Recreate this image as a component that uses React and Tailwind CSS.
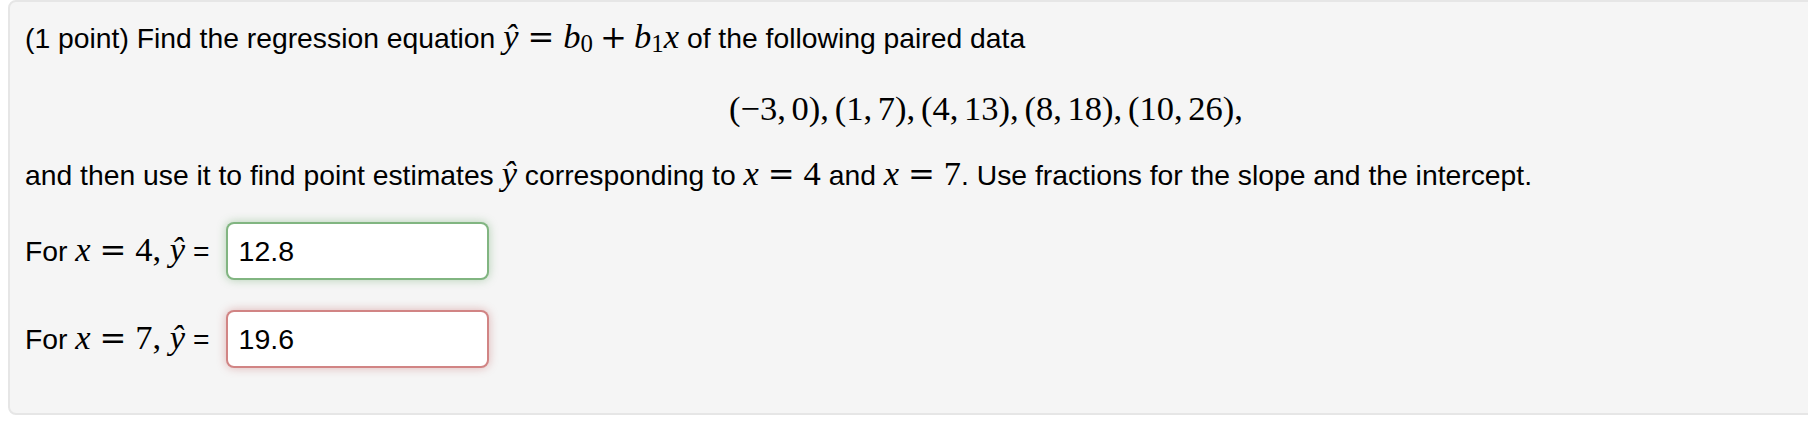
import React from "react";

const serif = "font-['Liberation_Serif',serif]";

function M({ children }) {
  return <span className={`${serif} text-[34.5px] leading-none whitespace-nowrap`}>{children}</span>;
}
function I({ children }) {
  return <span className="italic">{children}</span>;
}
function Rel({ children }) {
  return (
    <span className="mx-[0.278em] font-['DejaVu_Serif',serif] text-[0.93em]">{children}</span>
  );
}
function Bin({ children }) {
  return (
    <span className="mx-[0.222em] font-['DejaVu_Serif',serif] text-[0.93em]">{children}</span>
  );
}
function Sub({ children }) {
  return <span className="text-[0.72em] align-[-0.18em]">{children}</span>;
}
function Th() {
  return <span className="ml-[0.167em]"></span>;
}

function Answer({ label, value, ok }) {
  const cls = ok
    ? "border-[rgba(81,153,81,0.72)] shadow-[0_0_10px_rgba(81,153,81,0.4)]"
    : "border-[rgba(191,84,84,0.72)] shadow-[0_0_10px_rgba(191,84,84,0.4)]";
  return (
    <div className="flex items-center h-[58px]">
      <span className="whitespace-nowrap">
        For{" "}
        <M>
          <I>x</I>
          <Rel>=</Rel>
          {label},<span className="ml-[0.25em]"></span>
          <I>ŷ</I>
        </M>{" "}
        =
      </span>
      <input
        readOnly
        value={value}
        className={`ml-[16px] w-[263px] h-[58px] bg-white border-2 rounded-[8px] px-[11px] text-[28.5px] text-black outline-none font-['Liberation_Sans',Arial,sans-serif] ${cls}`}
      />
    </div>
  );
}

export default function App() {
  return (
    <div className="w-[1808px] h-[446px] bg-white overflow-hidden font-['Liberation_Sans',Arial,sans-serif] text-black text-[28.3px]">
      <div className="ml-2 w-[1956px] bg-[#f5f5f5] border-2 border-[#e6e6e6] rounded-[8px] px-[15px] pt-[16px] pb-[45px]">
        <div className="leading-[40px] whitespace-nowrap">
          (1 point) Find the regression equation{" "}
          <M>
            <I>ŷ</I>
            <Rel>=</Rel>
            <I>b</I>
            <Sub>0</Sub>
            <Bin>+</Bin>
            <I>b</I>
            <Sub>1</Sub>
            <I>x</I>
          </M>{" "}
          of the following paired data
        </div>
        <div className="mt-[32px] leading-[40px] text-center">
          <M>
            (−3,<Th />0),<Th />
            (1,<Th />7),<Th />
            (4,<Th />13),<Th />
            (8,<Th />18),<Th />
            (10,<Th />26),
          </M>
        </div>
        <div className="mt-[25px] leading-[40px] whitespace-nowrap">
          and then use it to find point estimates{" "}
          <M>
            <I>ŷ</I>
          </M>{" "}
          corresponding to{" "}
          <M>
            <I>x</I>
            <Rel>=</Rel>4
          </M>{" "}
          and{" "}
          <M>
            <I>x</I>
            <Rel>=</Rel>7
          </M>
          . Use fractions for the slope and the intercept.
        </div>
        <div className="mt-[27px]">
          <Answer label="4" value="12.8" ok />
        </div>
        <div className="mt-[30px]">
          <Answer label="7" value="19.6" ok={false} />
        </div>
      </div>
    </div>
  );
}
